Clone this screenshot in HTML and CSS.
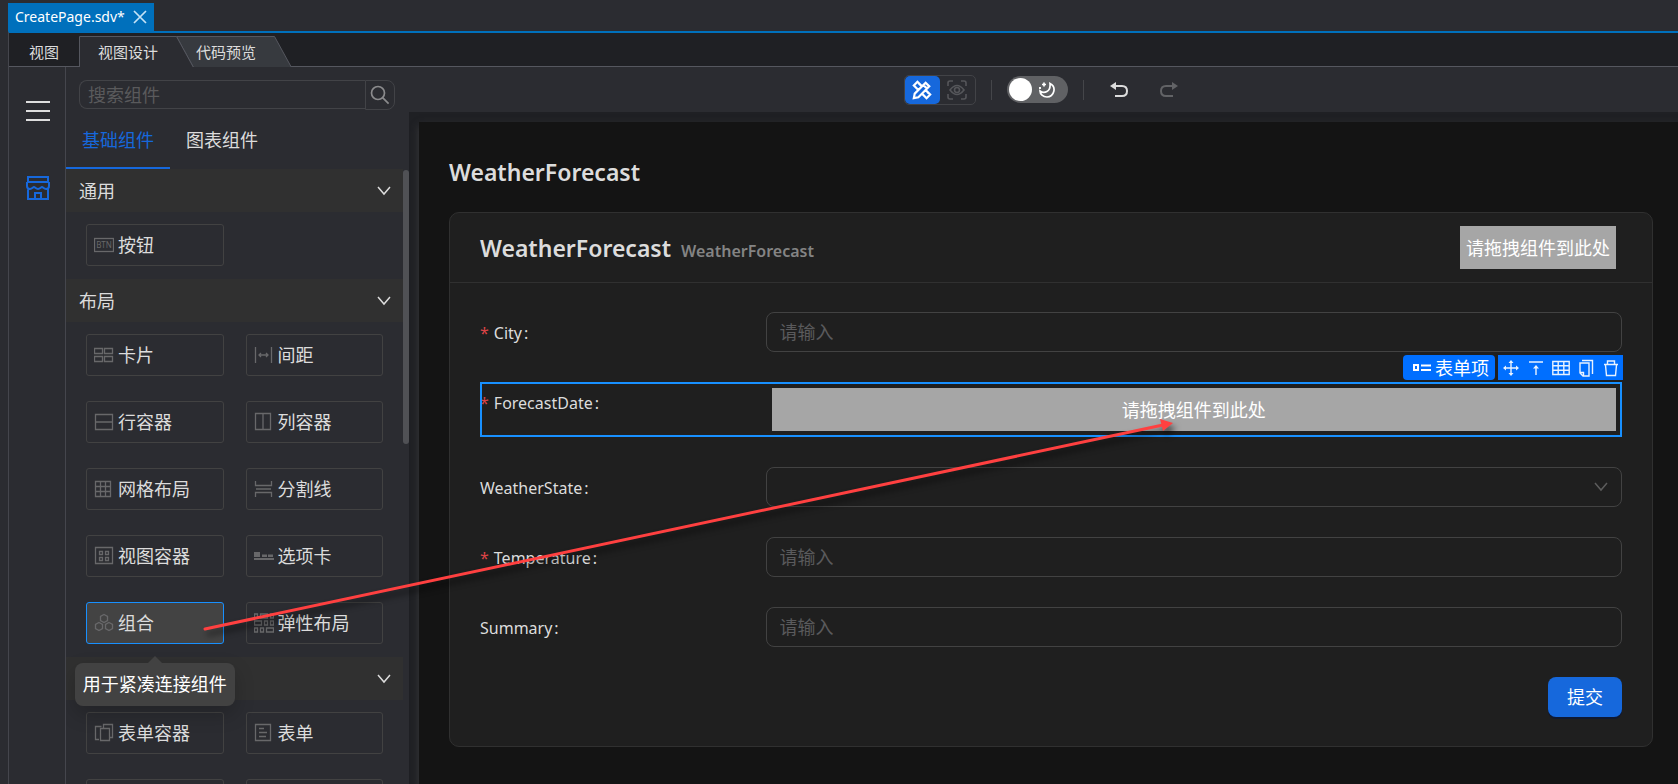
FILE: index.html
```html
<!DOCTYPE html>
<html lang="zh-CN">
<head>
<meta charset="utf-8">
<meta name="viewport" content="width=device-width, initial-scale=1">
<title>CreatePage.sdv</title>
<link rel="stylesheet" href="styles.css">
</head>
<body>
<div class="file-tabs">
  <div class="file-tab">
    <span>CreatePage.sdv*</span>
    <button class="file-close" type="button" aria-label="关闭"><svg width="14" height="14" viewBox="0 0 14 14"><path d="M1 1l12 12M13 1L1 13" stroke="#c4e2f6" stroke-width="1.7" fill="none"/></svg></button>
  </div>
</div>
<div class="editor">
  <nav class="view-bar">
    <span class="view-label">视图</span>
    <div class="view-tabs">
      <svg class="view-shape" width="213" height="31" viewBox="0 0 213 31"><path d="M97.500.5h98l17 31h-98z" fill="#373a3f" stroke="#55575f"/><path d="M.5 31V.5h97l17 31" fill="#2b2c31" stroke="#55575f"/></svg>
      <button class="view-tab" type="button">视图设计</button>
      <button class="view-tab" type="button">代码预览</button>
    </div>
  </nav>
  <div class="workspace">
    <aside class="rail">
      <button class="rail-btn" type="button" aria-label="菜单"><svg width="24" height="22" viewBox="0 0 24 22"><path d="M0 2h24M0 11h24M0 20h24" stroke="#dedede" stroke-width="2"/></svg></button>
      <button class="rail-btn" type="button" aria-label="组件库"><svg width="24" height="24" viewBox="0 0 24 24" fill="none" stroke="#1668dc" stroke-width="2"><path d="M2 1h20v5H2zM1 6v4c0 2 1 3 3 3s3-2 4-2 2 2 4 2 3-2 4-2 2 2 4 2 3-1 3-3V6M2 12v11h20V12M9 23v-6h6v6"/></svg></button>
    </aside>
    <section class="panel">
      <div class="search">
        <input class="search-input" type="text" placeholder="搜索组件" aria-label="搜索组件">
        <button class="search-btn" type="button" aria-label="搜索"><svg width="20" height="20" viewBox="0 0 20 20" fill="none" stroke="#8b8b8d" stroke-width="1.7"><circle cx="8" cy="8" r="6.500"/><path d="M12.600 12.600l6 6"/></svg></button>
      </div>
      <div class="panel-tabs">
        <button class="panel-tab active" type="button">基础组件</button>
        <button class="panel-tab" type="button">图表组件</button>
      </div>
      <div class="scroller">
        <div class="groups">
          <button class="group-head" type="button"><span>通用</span><svg width="14" height="10" viewBox="0 0 14 10"><path d="M1 1l6 7 6-7" fill="none" stroke="#dcdcdc" stroke-width="1.500"/></svg></button>
          <div class="items">
            <button class="item" type="button"><svg class="ico" viewBox="0 0 20 20"><rect x=".5" y="3.500" width="19" height="13"/><text class="ico-text" x="10" y="13" text-anchor="middle">BTN</text></svg>按钮</button>
          </div>
          <button class="group-head" type="button"><span>布局</span><svg width="14" height="10" viewBox="0 0 14 10"><path d="M1 1l6 7 6-7" fill="none" stroke="#dcdcdc" stroke-width="1.500"/></svg></button>
          <div class="items">
            <button class="item" type="button"><svg class="ico" viewBox="0 0 20 20"><path d="M.5 3.500h8v5h-8zM10.500 3.500h8v5h-8zM.5 11.500h8v5h-8zM10.500 11.500h8v5h-8z"/></svg>卡片</button>
            <button class="item" type="button"><svg class="ico" viewBox="0 0 20 20"><path d="M1.500 2v16M17.500 2v16M5 10h9M7 8l-2 2 2 2M12 8l2 2-2 2"/></svg>间距</button>
            <button class="item" type="button"><svg class="ico" viewBox="0 0 20 20"><path d="M1.500 2.500h17v15h-17zM1.500 10h17"/></svg>行容器</button>
            <button class="item" type="button"><svg class="ico" viewBox="0 0 20 20"><path d="M1.500 1.500h15v16h-15zM9 1.500v16"/></svg>列容器</button>
            <button class="item" type="button"><svg class="ico" viewBox="0 0 20 20"><path d="M1.500 2.500h15v15h-15zM6.500 2.500v15M11.500 2.500v15M1.500 7.500h15M1.500 12.500h15"/></svg>网格布局</button>
            <button class="item" type="button"><svg class="ico" viewBox="0 0 20 20"><path d="M1.500 2v4.500h16V2M2 10h15M1.500 18v-4.500h16V18"/></svg>分割线</button>
            <button class="item" type="button"><svg class="ico" viewBox="0 0 20 20"><path d="M1.500 1.500h17v16h-17zM5.500 5.500h3v3h-3zM11.500 5.500h3v3h-3zM5.500 11.500h3v3h-3zM11.500 11.500h3v3h-3z"/></svg>视图容器</button>
            <button class="item" type="button"><svg class="ico" viewBox="0 0 20 20"><path class="ico-fill" d="M0 6h6v5H0zM8 8.500h5V11H8zM14 8.500h5V11h-5zM0 12h20v2H0z"/></svg>选项卡</button>
            <div class="item-wrap">
              <button class="item hovered" type="button"><svg class="ico" viewBox="0 0 20 20"><path d="M10 1.500l3.500 2v4L10 9.500l-3.500-2v-4zM5 9.500l3.500 2v4L5 17.500l-3.500-2v-4zM15 9.500l3.500 2v4l-3.500 2-3.500-2v-4z"/></svg>组合</button>
              <div class="tooltip" role="tooltip">用于紧凑连接组件</div>
            </div>
            <button class="item" type="button"><svg class="ico" viewBox="0 0 20 20"><path d="M.5 1h3v4h-3zM6.500 1h7v4h-7zM16.500 1h3v4h-3zM.5 8h7v4h-7zM10.500 8h3v4h-3zM16.500 8h3v4h-3zM.5 15h3v4h-3zM6.500 15h3v4h-3zM12.500 15h7v4h-7z"/></svg>弹性布局</button>
          </div>
          <button class="group-head" type="button"><span></span><svg width="14" height="10" viewBox="0 0 14 10"><path d="M1 1l6 7 6-7" fill="none" stroke="#dcdcdc" stroke-width="1.500"/></svg></button>
          <div class="items">
            <button class="item" type="button"><svg class="ico" viewBox="0 0 20 20"><path d="M5 16.500H1.500v-13h6M6.500 5.500h9v12h-9zM9.500 5V1.500h9v13h-3"/></svg>表单容器</button>
            <button class="item" type="button"><svg class="ico" viewBox="0 0 20 20"><path d="M1.500 1.500h15v16h-15zM5 5.500h5M5 9.500h8M5 13.500h7"/></svg>表单</button>
            <button class="item" type="button" aria-hidden="true"></button>
            <button class="item" type="button" aria-hidden="true"></button>
          </div>
        </div>
        <div class="scrollbar"><div class="thumb"></div></div>
      </div>
    </section>
    <main class="stage">
      <div class="toolbar">
        <div class="mode">
          <button class="mode-btn on" type="button" aria-label="设计"><svg width="20" height="20" viewBox="0 0 22 22" fill="none" stroke="#fff" stroke-width="2.400"><path d="M2 20l1-5L15 3l4 4L7 19zM12.500 5.500l4 4M7 11L2 6l4-4 5 5M9 4L7.500 5.500M15 11l5 5-4 4-5-5M18 13l-1.500 1.500"/></svg></button>
          <button class="mode-btn" type="button" aria-label="预览"><svg width="20" height="20" viewBox="0 0 20 20" fill="none" stroke="#55565a" stroke-width="1.600"><path d="M1 6V3q0-2 2-2h3M14 1h3q2 0 2 2v3M19 14v3q0 2-2 2h-3M6 19H3q-2 0-2-2v-3M3 10q7-9 14 0-7 9-14 0z"/><circle cx="10" cy="10" r="2.500"/></svg></button>
        </div>
        <span class="divider"></span>
        <button class="theme" type="button" role="switch" aria-checked="false" aria-label="主题"><span class="knob"></span><svg width="16" height="16" viewBox="0 0 16 16" fill="none" stroke="#fff" stroke-width="1.700"><path d="M11 1.500C18 5 15 15 8 15 4 15 1 12 1 9c4 3 11 1 10-7.500z"/><path d="M5 .5v4M3 2.500h4M1 5v2M0 6h2"/></svg></button>
        <span class="divider"></span>
        <button class="history undo" type="button" aria-label="撤销"><svg width="18" height="16" viewBox="0 0 18 16"><path d="M4 4h8q5 0 5 5t-5 5H5" fill="none" stroke="#dcdcdc" stroke-width="2"/><path d="M0 4l6-4v8z" fill="#dcdcdc"/></svg></button>
        <button class="history" type="button" aria-label="重做"><svg width="18" height="16" viewBox="0 0 18 16"><path d="M14 4H6Q1 4 1 9t5 5h7" fill="none" stroke="#626366" stroke-width="2"/><path d="M18 4l-6-4v8z" fill="#626366"/></svg></button>
      </div>
      <div class="canvas-wrap">
        <div class="canvas">
          <h1 class="page-title">WeatherForecast</h1>
          <article class="card">
            <header class="card-head">
              <h2 class="card-title">WeatherForecast</h2>
              <span class="card-sub">WeatherForecast</span>
              <div class="drop head-drop">请拖拽组件到此处</div>
            </header>
            <form class="form">
              <div class="row">
                <label class="label" for="city"><i class="req">*</i>City<span class="colon">:</span></label>
                <input class="control" id="city" type="text" placeholder="请输入">
              </div>
              <div class="row selected">
                <span class="label"><i class="req">*</i>ForecastDate<span class="colon">:</span></span>
                <div class="slot"><div class="drop">请拖拽组件到此处</div></div>
                <div class="float-bar">
                  <span class="tag"><svg width="18" height="10" viewBox="0 0 18 10"><path d="M1 2h4v5H1z" fill="none" stroke="#fff" stroke-width="2"/><path d="M8 2.500h10M8 7h10" stroke="#fff" stroke-width="2"/></svg>表单项</span>
                  <div class="actions">
                    <button class="action" type="button" aria-label="移动"><svg viewBox="0 0 18 18"><path d="M9 2v14M2 9h14"/><path class="solid" d="M9 1l2.500 3h-5zM9 17l2.500-3h-5zM1 9l3-2.500v5zM17 9l-3-2.500v5z"/></svg></button>
                    <button class="action" type="button" aria-label="上级"><svg viewBox="0 0 18 18"><path d="M2 3h14M9 7v9"/><path class="solid" d="M9 6l3 3.500H6z"/></svg></button>
                    <button class="action" type="button" aria-label="表格"><svg viewBox="0 0 18 18"><path d="M.8 2.500h16.400v13H.8zM1 6.800h16M1 11.200h16M6.200 2.500v13M11.800 2.500v13"/></svg></button>
                    <button class="action" type="button" aria-label="复制"><svg viewBox="0 0 18 18"><path d="M3 4h9v13H6l-3-3zM3 13.500h3.500V17M5 1.500h10.500V15"/></svg></button>
                    <button class="action" type="button" aria-label="删除"><svg viewBox="0 0 18 18"><path d="M2 5.500h14M5.500 5V2h7v3M3.500 6l1 10.500h9l1-10.500"/></svg></button>
                  </div>
                </div>
              </div>
              <div class="row">
                <label class="label" for="state">WeatherState<span class="colon">:</span></label>
                <div class="select-box">
                  <select class="control" id="state"><option></option></select>
                  <svg class="select-arrow" width="14" height="10" viewBox="0 0 14 10"><path d="M1 1l6 7 6-7" fill="none" stroke="#5c5c5c" stroke-width="1.500"/></svg>
                </div>
              </div>
              <div class="row">
                <label class="label" for="temp"><i class="req">*</i>Temperature<span class="colon">:</span></label>
                <input class="control" id="temp" type="text" placeholder="请输入">
              </div>
              <div class="row">
                <label class="label" for="summary">Summary<span class="colon">:</span></label>
                <input class="control" id="summary" type="text" placeholder="请输入">
              </div>
              <button class="submit" type="button">提交</button>
            </form>
          </article>
        </div>
      </div>
    </main>
  </div>
</div>
<svg class="drag-arrow" width="1678" height="784" viewBox="0 0 1678 784"><path d="M205 629L1163 425" fill="none" stroke="#ff4040" stroke-width="3" stroke-linecap="round"/><path d="M1160 419l13 4-10 8z" fill="#ff4040"/></svg>
</body>
</html>
```

FILE: styles.css
```css
* { box-sizing: border-box; }
body {
  margin: 0;
  height: 100vh;
  overflow: hidden;
  display: flex;
  flex-direction: column;
  background: #2b2c31;
  color: #dcdcdc;
  font: 16px/24px "Noto Sans", "Noto Sans CJK SC", sans-serif;
}
button, input, select { font: inherit; color: inherit; margin: 0; }
button { background: none; border: 0; padding: 0; display: flex; align-items: center; }
svg { flex: none; display: block; }

.file-tabs { flex: none; padding: 3px 0 0 8px; display: flex; }
.file-tab {
  height: 28px;
  width: 146px;
  padding: 0 7px;
  display: flex;
  align-items: center;
  justify-content: space-between;
  background: #0070bc;
  color: #fff;
  font-size: 14px;
  line-height: 28px;
}

.editor {
  flex: 1;
  min-height: 0;
  margin-left: 8px;
  border-top: 2px solid #0070bc;
  border-left: 1px solid #45464d;
  display: flex;
  flex-direction: column;
}
.view-bar {
  flex: none;
  height: 34px;
  display: flex;
  align-items: flex-end;
  background: #1f2024;
  border-bottom: 1px solid #55575f;
  font-size: 15px;
}
.view-label { width: 70px; text-align: center; line-height: 28px; }
.view-tabs { position: relative; display: flex; }
.view-shape { position: absolute; left: 0; bottom: -1px; }
.view-tab { position: relative; height: 28px; width: 98px; justify-content: center; }

.workspace { flex: 1; min-height: 0; display: grid; grid-template-columns: 57px 343px 1fr; }
.rail {
  border-right: 1px solid #45464d;
  display: flex;
  flex-direction: column;
  align-items: center;
  gap: 54px;
  padding: 33px 0 0 1px;
}

.panel { display: flex; flex-direction: column; min-height: 0; }
.search { display: flex; margin: 13px 14px 0 13px; height: 30px; }
.search-input {
  flex: 1;
  min-width: 0;
  height: 29px;
  padding: 0 8px;
  background: transparent;
  border: 1px solid #424347;
  border-right: 0;
  border-radius: 8px 0 0 8px;
  outline: 0;
  font-size: 18px;
}
.search-input::placeholder, .control::placeholder { color: #5a5a5c; opacity: 1; }
.search-btn { width: 30px; justify-content: center; border: 1px solid #424347; border-radius: 0 8px 8px 0; }
.panel-tabs { display: flex; height: 60px; flex: none; }
.panel-tab { height: 60px; padding: 3px 16px 0; font-size: 18px; border-bottom: 3px solid transparent; }
.panel-tab.active { color: #1668dc; border-color: #1668dc; }
.scroller { flex: 1; min-height: 0; display: flex; overflow: hidden; margin-top: -1px; }
.groups { flex: 1; }
.group-head {
  width: 100%;
  height: 43px;
  padding: 0 12px 0 13px;
  justify-content: space-between;
  background: #303030;
  font-size: 18px;
}
.items {
  display: grid;
  grid-template-columns: 1fr 1fr;
  gap: 25px 22px;
  padding: 12px 20px 13px;
}
.item {
  width: 100%;
  height: 42px;
  padding: 0 7px;
  gap: 4px;
  border: 1px solid #424242;
  border-radius: 3px;
  font-size: 18px;
  white-space: nowrap;
}
.item.hovered { background: #434343; border-color: #1890ff; }
.item-wrap { position: relative; }
.ico { width: 20px; height: 20px; fill: none; stroke: #68686a; stroke-width: 1.3; }
.ico-text { font-size: 8px; fill: #68686a; stroke: none; }
.ico-fill { fill: #68686a; stroke: none; }
.tooltip {
  position: absolute;
  z-index: 3;
  top: 61px;
  left: 50%;
  transform: translateX(-50%);
  padding: 9px 8px 10px;
  border-radius: 8px;
  background: #424242;
  color: #fff;
  font-size: 18px;
  white-space: nowrap;
  box-shadow: 0 8px 20px rgba(0, 0, 0, .2);
}
.tooltip::before {
  content: "";
  position: absolute;
  top: -7px;
  left: 50%;
  margin-left: -8px;
  border: 8px solid transparent;
  border-top: 0;
  border-bottom-color: #424242;
}
.scrollbar { width: 6px; flex: none; padding-top: 1px; }
.thumb { height: 274px; border-radius: 3px; background: #505155; }

.stage { display: flex; flex-direction: column; min-width: 0; }
.toolbar { height: 45px; padding-right: 6px; flex: none; display: flex; align-items: center; justify-content: center; gap: 15px; }
.mode { display: flex; height: 30px; border: 1px solid #424347; border-radius: 5px; }
.mode-btn { width: 35px; height: 28px; justify-content: center; border-radius: 5px; }
.mode-btn.on { background: #1668dc; }
.divider { width: 1px; height: 20px; background: #45464a; }
.theme { width: 61px; height: 27px; border-radius: 14px; background: #606164; padding: 0 2px; gap: 7px; }
.knob { width: 23px; height: 23px; border-radius: 50%; background: #fff; }
.undo { margin: 0 17px 0 11px; }

.canvas-wrap { flex: 1; min-height: 0; padding: 10px 0 0 10px; background: #1f2024; overflow: hidden; }
.canvas { height: 100%; padding: 35px 25px 0 30px; background: #141414; box-shadow: 0 4px 8px #3a3a3c; }
.page-title, .card-title { margin: 0; font-size: 23px; line-height: 30px; font-weight: 600; }
.card { margin-top: 25px; border: 1px solid #303030; border-radius: 10px; background: #1f1f1f; }
.card-head { height: 70px; padding: 0 36px 0 30px; display: flex; align-items: center; border-bottom: 1px solid #303030; }
.card-sub { margin: 7px 0 0 10px; font-size: 16px; font-weight: 600; color: #848484; }
.drop { height: 43px; display: flex; align-items: center; justify-content: center; background: #a6a6a6; color: #fff; font-size: 18px; }
.head-drop { margin-left: auto; padding: 0 6px; }
.form { padding: 29px 30px; display: flex; flex-direction: column; gap: 30px; }
.row { position: relative; display: grid; grid-template-columns: 1fr 3fr; align-items: start; }
.label { line-height: 42px; height: 40px; }
.req { font-style: normal; color: #dc4446; margin-right: 5px; }
.colon { margin-left: 2px; }
.control {
  display: block;
  width: 100%;
  height: 40px;
  padding: 0 13px;
  background: transparent;
  border: 1px solid #424242;
  border-radius: 8px;
  outline: 0;
  appearance: none;
  font-size: 18px;
}
.select-box { position: relative; }
.select-arrow { position: absolute; right: 14px; top: 15px; pointer-events: none; }
.selected { outline: 2px solid #1890ff; outline-offset: -2px; }
.slot { padding: 6px; }
.float-bar { position: absolute; right: -1px; bottom: 100%; margin-bottom: 2px; display: flex; gap: 3px; }
.tag { height: 25px; padding: 0 6px 0 10px; display: flex; align-items: center; gap: 4px; background: #006fff; border-radius: 4px; color: #fff; font-size: 18px; }
.actions { display: flex; background: #006fff; }
.action { width: 25px; height: 25px; justify-content: center; }
.action svg { width: 18px; height: 18px; fill: none; stroke: #e8f2ff; stroke-width: 1.4; }
.action .solid { fill: #e8f2ff; stroke: none; }
.submit { align-self: flex-end; height: 40px; padding: 0 19px; border-radius: 8px; background: #1668dc; color: #fff; font-size: 18px; box-shadow: 0 2px 0 rgba(0, 20, 70, .5); }

.drag-arrow { position: absolute; left: 0; top: 0; z-index: 5; pointer-events: none; filter: drop-shadow(3px 5px 3px rgba(0, 0, 0, .6)); }
```
